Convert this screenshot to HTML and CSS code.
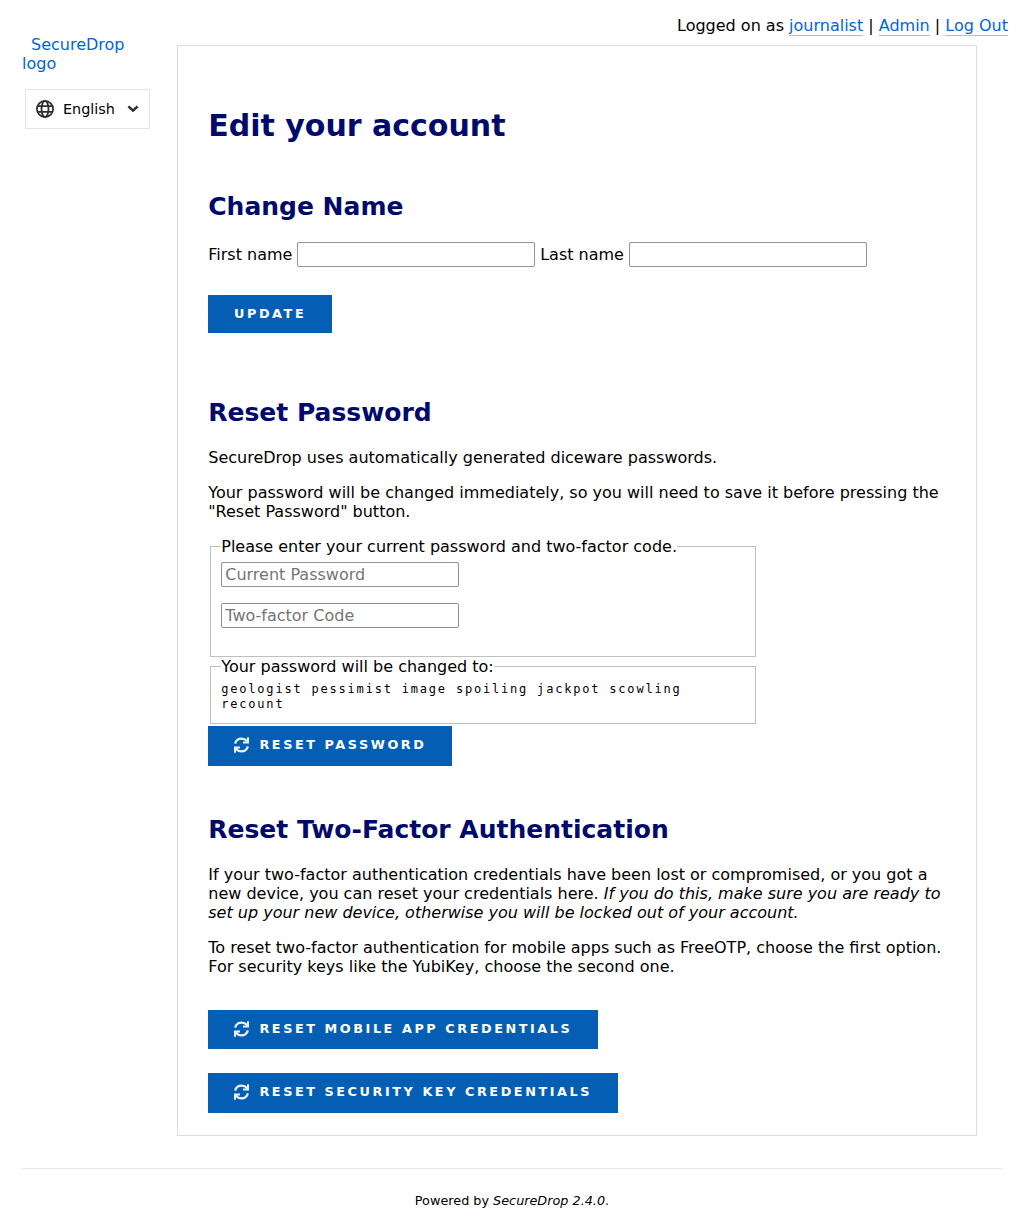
FILE: index.html
```html
<!DOCTYPE html>
<html lang="en">
<head>
<meta charset="utf-8">
<title>SecureDrop</title>
<link rel="stylesheet" href="styles.css">
</head>
<body>
<svg class="defs" aria-hidden="true">
  <symbol id="sync" viewBox="0 0 15 16">
    <path d="M1.1 6.6C2 3.3 4.2 1.6 7.6 1.6C10 1.6 11.6 2.4 13.3 4.2M13.9 9.4C13 12.7 10.8 14.4 7.4 14.4C5 14.4 3.4 13.6 1.7 11.8" fill="none" stroke="currentColor" stroke-width="2.2"/>
    <path d="M14 .2V5.4H9M1 15.8V10.6H6" fill="none" stroke="currentColor" stroke-width="2"/>
    <path d="M1 10.4H5L1 14Z" fill="currentColor"/>
  </symbol>
</svg>
<nav class="session">Logged on as <a href="#">journalist</a> | <a href="#">Admin</a> | <a href="#">Log Out</a></nav>
<div class="container">
  <aside class="sidebar">
    <a class="logo" href="#">SecureDrop logo</a>
    <div class="language">
      <svg class="globe" viewBox="0 0 18 18" fill="none" stroke="#2e2e32" stroke-width="1.8"><circle cx="9" cy="9" r="8.1"/><ellipse cx="9" cy="9" rx="3.5" ry="8.1"/><path d="M1.4 6.2H16.6M1.4 11.8H16.6"/></svg>
      <span>English</span>
      <svg class="chevron" viewBox="0 0 12 8" fill="none" stroke="#2e2e32" stroke-width="2.6"><path d="M1.4 1.4 6 5.6 10.6 1.4"/></svg>
    </div>
  </aside>
  <main class="panel">
    <h1>Edit your account</h1>
    <h2 class="name-title">Change Name</h2>
    <form class="name-row">
      <label for="first">First name</label><input id="first" type="text">
      <label for="last">Last name</label><input id="last" type="text">
    </form>
    <button class="btn update" type="button">Update</button>

    <h2 class="password-title">Reset Password</h2>
    <p>SecureDrop uses automatically generated diceware passwords.</p>
    <p>Your password will be changed immediately, so you will need to save it before pressing the "Reset Password" button.</p>
    <fieldset class="current">
      <legend>Please enter your current password and two-factor code.</legend>
      <input type="password" placeholder="Current Password">
      <input type="text" placeholder="Two-factor Code">
    </fieldset>
    <fieldset class="generated">
      <legend>Your password will be changed to:</legend>
      <div class="passphrase">geologist pessimist image spoiling jackpot scowling recount</div>
    </fieldset>
    <button class="btn" type="button"><svg><use href="#sync"/></svg>Reset Password</button>

    <h2 class="factor-title">Reset Two-Factor Authentication</h2>
    <p>If your two-factor authentication credentials have been lost or compromised, or you got a new device, you can reset your credentials here. <em>If you do this, make sure you are ready to set up your new device, otherwise you will be locked out of your account.</em></p>
    <p>To reset two-factor authentication for mobile apps such as FreeOTP, choose the first option. For security keys like the YubiKey, choose the second one.</p>
    <button class="btn mobile" type="button"><svg><use href="#sync"/></svg>Reset Mobile App Credentials</button>
    <button class="btn" type="button"><svg><use href="#sync"/></svg>Reset Security Key Credentials</button>
  </main>
</div>
<footer>Powered by <em>SecureDrop 2.4.0</em>.</footer>
</body>
</html>
```
FILE: styles.css
```css
* { box-sizing: border-box; }
body {
  margin: 0;
  padding-top: 16px;
  background: #fff;
  color: #000;
  font: 16px/19px "DejaVu Sans", sans-serif;
}
.defs { position: absolute; width: 0; height: 0; }
a { color: #0065db; text-decoration: none; }
.session { height: 29px; padding-right: 16px; text-align: right; }
.session a { display: inline-block; height: 20px; border-bottom: 1px solid #99c1f1; }
.container { display: flex; }
.sidebar { width: 177px; padding: 0 27px 0 22px; }
.logo { display: block; margin-top: -10px; width: 120px; text-indent: 9px; }
.language {
  display: flex;
  align-items: center;
  width: 125px;
  height: 40px;
  margin: 16px 0 0 3px;
  padding: 0 10px;
  border: 1px solid #e4e4e4;
  font-size: 14.4px;
}
.globe { width: 18px; height: 18px; margin-right: 9px; }
.chevron { width: 12px; height: 8px; margin-left: auto; }
.panel {
  display: flex;
  flex-direction: column;
  align-items: flex-start;
  width: 800px;
  height: 1091px;
  padding: 62px 29px 0 30.25px;
  border: 1px solid #dedede;
}
h1, h2 { margin: 0; color: #000a6b; }
h1 { font-size: 30px; line-height: 36px; }
h2 { font-size: 25px; line-height: 30px; }
.name-title { margin-top: 48px; }
.name-row { display: flex; align-items: center; gap: 5.1px; margin-top: 20px; }
.name-row input { width: 237.6px; }
input {
  display: block;
  width: 238px;
  height: 25px;
  padding: 1px 3px;
  border: 1px solid #8f8f9d;
  border-radius: 2px;
  background: #fff;
  font: 16px/19px "DejaVu Sans", sans-serif;
}
input::placeholder { color: #757575; opacity: 1; }
.btn {
  display: flex;
  align-items: center;
  height: 40px;
  padding: 0 25.8px 3px;
  border: 0;
  background: #045fb4;
  color: #fff;
  font: bold 12.8px/15px "DejaVu Sans", sans-serif;
  letter-spacing: .2em;
  text-transform: uppercase;
}
.btn svg { width: 15px; height: 16px; margin-right: 10.4px; opacity: .92; }
.update { height: 38px; margin-top: 28px; padding-bottom: 1px; }
.password-title { margin: 65px 0 4px; }
p { margin: 16px 0 0; }
fieldset {
  width: 546px;
  margin: 0 2px;
  padding: 6px 10px 0;
  border: 1px solid #c0c0c0;
}
legend { padding: 0; }
.current { height: 120px; margin-top: 16px; }
.current input + input { margin-top: 16px; }
.generated { height: 67px; margin-bottom: 2px; }
.passphrase { font: 12px/15px "DejaVu Sans Mono", monospace; letter-spacing: .15em; }
.factor-title { margin: 49px 0 4px; }
.mobile { height: 39px; margin: 34px 0 24px; padding-bottom: 2px; }
footer {
  margin: 32px 22px 0;
  padding-top: 22px;
  border-top: 1px solid #e8e6f8;
  text-align: center;
  font-size: 12.8px;
}
```
